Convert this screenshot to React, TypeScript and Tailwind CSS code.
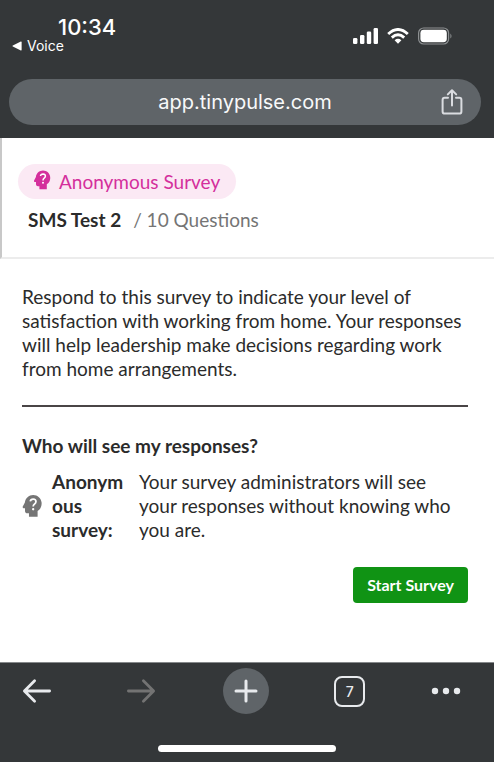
const DESCRIPTION =
  'Respond to this survey to indicate your level of satisfaction with working from home. Your responses will help leadership make decisions regarding work from home arrangements.';

function HeadIcon({ className }: { className: string }) {
  return (
    <svg viewBox="0 0 24 24" className={className} aria-hidden="true">
      <path
        fill="currentColor"
        d="M20.2 9C19.8 5.4 16.8 2.6 13 2.6 9.3 2.6 6.3 5.4 5.9 9l-1.8 3.4c-.4.7.1 1.6.9 1.6h1v2.2c0 1.1.9 2 2 2h1.4v3h7.4v-4.9c2.5-1.4 3.8-4.4 3.4-7.9z"
      />
      <path
        d="M10.5 8 Q10.8 6 13 6 Q15.4 6.1 15.4 8.1 Q15.4 9.4 14.2 10.2 Q13 11 13 12.5"
        fill="none"
        stroke="#fff"
        strokeWidth="1.5"
      />
      <circle cx="13" cy="14.8" r="1" fill="#fff" />
    </svg>
  );
}

function StatusBar() {
  return (
    <div className="flex items-start justify-between pr-[41px] pl-3 pt-4">
      <div>
        <div className="pl-[46px] text-[22px] leading-[22px] font-medium">10:34</div>
        <a href="#voice" className="flex items-center gap-1 text-[14px] leading-4">
          <svg width="11" height="10" viewBox="0 0 11 10" fill="currentColor" aria-hidden="true">
            <path d="M0.8 4.4 L8.8 0.6 Q9.6 0.3 9.6 1.2 V8.8 Q9.6 9.7 8.8 9.4 L0.8 5.6 Q0 5 0.8 4.4Z" />
          </svg>
          Voice
        </a>
      </div>
      <div className="flex items-center gap-2 pt-[11px]">
        <svg width="26" height="16" viewBox="0 0 26 16" fill="currentColor" aria-hidden="true">
          <rect x="0" y="10" width="4.4" height="6" rx="1.3" />
          <rect x="7" y="7" width="4.4" height="9" rx="1.3" />
          <rect x="13.8" y="3.5" width="4.4" height="12.5" rx="1.3" />
          <rect x="20.6" y="0" width="4.4" height="16" rx="1.3" />
        </svg>
        <svg width="22" height="16" viewBox="0 0 22 16" aria-hidden="true">
          <path
            d="M1.2 6 Q11 -3 20.8 6 M4.8 9.6 Q11 4 17.2 9.6"
            fill="none"
            stroke="currentColor"
            strokeWidth="2.9"
          />
          <path d="M7.6 12.3 Q11 9.4 14.4 12.3 L11 15.8Z" fill="currentColor" />
        </svg>
        <svg width="36" height="18" viewBox="0 0 36 18" aria-hidden="true">
          <rect x="1.6" y="1" width="30" height="16" rx="5" fill="none" stroke="#8d9092" strokeWidth="1.2" />
          <rect x="3.4" y="2.8" width="26.4" height="12.4" rx="3.4" fill="currentColor" />
          <path d="M33.4 6.4 Q35.6 9 33.4 11.6Z" fill="#8d9092" />
        </svg>
      </div>
    </div>
  );
}

function AddressBar() {
  return (
    <div className="mt-[25px] mr-[13px] ml-[9px] flex h-[46px] items-center rounded-full bg-[#5f6468] pr-4 pl-[42px]">
      <div className="flex-1 text-center text-[20px] leading-6 text-[#f8f9fa]">app.tinypulse.com</div>
      <button type="button" aria-label="Share" className="text-[#dadce0]">
        <svg
          width="26"
          height="28"
          viewBox="0 0 26 28"
          fill="none"
          stroke="currentColor"
          strokeWidth="2"
          strokeLinecap="round"
          strokeLinejoin="round"
        >
          <path d="M9 9.8 H5.6 Q3.6 9.8 3.6 12 V23.4 Q3.6 25.6 6 25.6 H20 Q22.4 25.6 22.4 23.4 V12 Q22.4 9.8 20.4 9.8 H17" />
          <path d="M13 17.6 V2.4 M8.8 6.4 L13 2.2 L17.2 6.4" />
        </svg>
      </button>
    </div>
  );
}

function SurveyHeader() {
  return (
    <header className="border-b-2 border-l-2 border-b-[#ececec] border-l-[#c8c8c8] px-4 pt-[26px] pb-[25px]">
      <div className="inline-flex h-[35px] items-center gap-[5px] rounded-full bg-[#fbe9f4] px-3 text-[#d42f9c]">
        <HeadIcon className="size-6 -mt-1" />
        <span className="pr-1">Anonymous Survey</span>
      </div>
      <div className="mt-[9px] flex gap-3 pl-[10px]">
        <h1 className="font-bold">SMS Test 2</h1>
        <span className="text-[#757575]">/ 10 Questions</span>
      </div>
    </header>
  );
}

function BottomBar() {
  return (
    <nav className="border-t border-[#85888a] bg-[#343739] pt-[5px] pb-[10px] text-[#e8eaed]">
      <div className="flex h-[46px] items-center justify-between pr-[33px] pl-[14px]">
        <button type="button" aria-label="Back" className="flex w-[46px] justify-center">
          <svg width="30" height="26" viewBox="0 0 30 26" fill="none" stroke="currentColor" strokeWidth="2.8" strokeLinecap="round" strokeLinejoin="round">
            <path d="M27.6 13 H2.6 M12.6 2.8 L2.4 13 L12.6 23.2" />
          </svg>
        </button>
        <button type="button" aria-label="Forward" className="flex w-[46px] justify-center text-[#737373]">
          <svg width="30" height="26" viewBox="0 0 30 26" fill="none" stroke="currentColor" strokeWidth="2.8" strokeLinecap="round" strokeLinejoin="round">
            <path d="M2.4 13 H27.4 M17.4 2.8 L27.6 13 L17.4 23.2" />
          </svg>
        </button>
        <button type="button" aria-label="New tab" className="flex size-[46px] items-center justify-center rounded-full bg-[#5f6468]">
          <svg width="24" height="24" viewBox="0 0 24 24" fill="none" stroke="currentColor" strokeWidth="3" strokeLinecap="round">
            <path d="M12 2 V22 M2 12 H22" />
          </svg>
        </button>
        <button type="button" aria-label="Tabs" className="flex w-[46px] justify-center">
          <span className="flex size-[31px] items-center justify-center rounded-lg border-2 border-[#e8eaed] text-[14px] font-medium">
            7
          </span>
        </button>
        <button type="button" aria-label="Menu" className="flex w-[30px] justify-center">
          <svg width="30" height="8" viewBox="0 0 30 8" fill="currentColor">
            <circle cx="4" cy="4" r="3.2" />
            <circle cx="15" cy="4" r="3.2" />
            <circle cx="26" cy="4" r="3.2" />
          </svg>
        </button>
      </div>
      <div className="mx-auto mt-[31px] h-[7px] w-[178px] rounded-full bg-white" />
    </nav>
  );
}

export default function App() {
  return (
    <div className="flex min-h-screen flex-col bg-white font-['Inter',sans-serif]">
      <div className="bg-[#343739] pb-[13px] text-white">
        <StatusBar />
        <AddressBar />
      </div>

      <main className="flex-1 font-['Lato',sans-serif] text-[19px] leading-6 text-[#2b2b2b]">
        <SurveyHeader />
        <div className="pt-[26px] pr-[26px] pb-8 pl-[22px]">
          <p>{DESCRIPTION}</p>
          <hr className="mt-6 border-t-2 border-[#4a4546]" />
          <h2 className="mt-[27px] font-bold">Who will see my responses?</h2>
          <div className="mt-3 flex items-center">
            <HeadIcon className="-ml-1 size-7 shrink-0 text-[#757575]" />
            <strong className="ml-[6px] w-[72px] shrink-0 font-bold break-words">Anonymous survey:</strong>
            <p className="ml-[15px] pr-3">Your survey administrators will see your responses without knowing who you are.</p>
          </div>
          <div className="mt-[25px] flex justify-end">
            <button type="button" className="h-9 rounded bg-[#109314] px-[14px] text-[16px] font-bold text-white">
              Start Survey
            </button>
          </div>
        </div>
      </main>

      <BottomBar />
    </div>
  );
}
